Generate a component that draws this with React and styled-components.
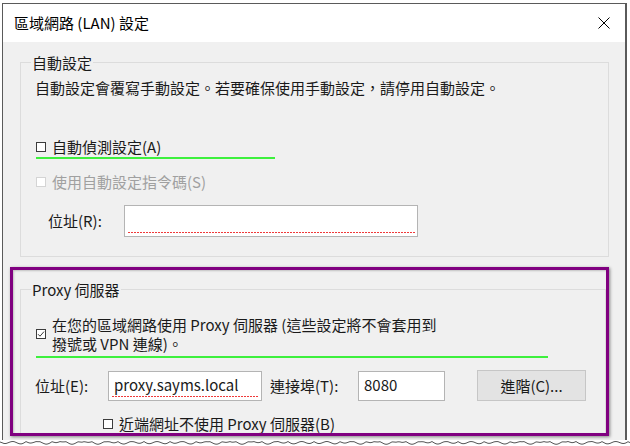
import React from 'react';
import styled, { createGlobalStyle } from 'styled-components';

const GlobalStyle = createGlobalStyle`
  * {
    box-sizing: border-box;
  }

  html, body {
    margin: 0;
    padding: 0;
    background: #fff;
  }

  body {
    font-family: 'Noto Sans CJK TC', 'Noto Sans', sans-serif;
    font-size: 15px;
    color: #1a1a1a;
  }
`;

const Page = styled.div`
  width: 630px;
  height: 446px;
  overflow: hidden;
  padding: 3px 0 0 2px;
  background: #fff;
`;

const Window = styled.div`
  width: 625px;
  height: 437px;
  display: flex;
  flex-direction: column;
  overflow: hidden;
  border-top: 1px solid #5a5a5a;
  border-left: 1px solid #5a5a5a;
  border-right: 2px solid #5a5a5a;
`;

const TitleBar = styled.div`
  height: 38px;
  flex: none;
  background: #fff;
  display: flex;
  align-items: center;
  justify-content: space-between;
  padding: 0 15px 0 11px;
`;

const Title = styled.span`
  font-size: 15px;
  line-height: 20px;
  color: #000;
`;

const CloseIcon = styled.svg`
  width: 12px;
  height: 12px;
  display: block;
`;

const Body = styled.div`
  flex: 1;
  background: #f0f0f0;
  padding: 10px 16px 0 7px;
`;

const Group = styled.fieldset`
  margin: 0 0 0 ${p => p.$inset}px;
  border: 1px solid #dcdcdc;
  border-bottom: ${p => (p.$open ? 'none' : '1px solid #dcdcdc')};
  padding: 0 14px ${p => p.$bottom}px 14px;
  min-width: 0;
`;

const Legend = styled.legend`
  font-size: 15px;
  line-height: 21px;
  height: 21px;
  padding: 0 1px;
  margin-left: -4px;
  color: #1a1a1a;
`;

const Text = styled.div`
  line-height: 20px;
  margin-top: ${p => p.$top}px;
`;

const CheckRow = styled.div`
  display: flex;
  align-items: center;
  gap: 6px;
  width: ${p => p.$width}px;
  margin: ${p => p.$top}px 0 0 ${p => p.$left}px;
  padding-bottom: ${p => p.$pad || 0}px;
  border-bottom: ${p => (p.$underline ? 2 : 1)}px solid ${p => (p.$underline ? '#3df03d' : 'transparent')};
  color: ${p => (p.$disabled ? '#a0a0a0' : '#1a1a1a')};
  line-height: ${p => p.$lh || 20}px;
`;

const Box = styled.span`
  flex: none;
  width: 10px;
  height: 10px;
  border: 1px solid ${p => (p.$disabled ? '#d4d4d4' : '#3c3c3c')};
  background: #fff;
  display: flex;
  align-items: center;
  justify-content: center;
`;

const FieldRow = styled.div`
  display: flex;
  align-items: center;
  margin-top: ${p => p.$top}px;
  padding-left: ${p => p.$left}px;
`;

const Label = styled.span`
  width: ${p => p.$width}px;
  margin-left: ${p => p.$left || 0}px;
  flex: none;
  line-height: 20px;
`;

const Input = styled.div`
  position: relative;
  flex: none;
  width: ${p => p.$width}px;
  height: ${p => p.$height}px;
  background: #fff;
  border: 1px solid #b4b4b4;
  padding: 3px 5px 0;
  line-height: 20px;
  color: #1a1a1a;

  &::after {
    content: '';
    display: ${p => (p.$squiggle ? 'block' : 'none')};
    position: absolute;
    left: 3px;
    right: 2px;
    bottom: 3px;
    height: 1px;
    background: repeating-linear-gradient(to right, #ef3a3a 0 2px, transparent 2px 3px);
  }
`;

const Button = styled.div`
  flex: none;
  width: 109px;
  height: 31px;
  margin-left: ${p => p.$left}px;
  background: #e3e3e3;
  border: 1px solid #c6c6c6;
  display: flex;
  align-items: center;
  justify-content: center;
  line-height: 20px;
  color: #1a1a1a;
`;

const Highlight = styled.div`
  margin-top: 10px;
  height: 169px;
  border: 3px solid #800080;
  padding: 9px 0 0 7px;
  overflow: hidden;
  box-shadow: 1px 1px 3px rgba(0, 0, 0, 0.45), inset 1px 1px 2px rgba(0, 0, 0, 0.2);
`;

const Torn = styled.svg`
  display: block;
  width: 630px;
  height: 6px;
  margin-left: -2px;
`;

const Check = ({ checked, disabled }) => (
  <Box $disabled={disabled}>
    {checked && (
      <svg width="8" height="8" viewBox="0 0 8 8">
        <path d="M1 4.2 L3 6.2 L7 1.6" fill="none" stroke="#3c3c3c" strokeWidth="1" />
      </svg>
    )}
  </Box>
);

const tornPath = () => {
  let d = 'M0 2';
  for (let x = 2; x <= 630; x += 2) {
    const y = 1.5 + Math.abs(Math.sin(x * 0.37) + Math.sin(x * 0.11)) * 1.4;
    d += ` L${x} ${y.toFixed(1)}`;
  }
  return d;
};

const App = () => {
  return (
    <>
      <GlobalStyle />
      <Page lang="zh-Hant-TW">
        <Window>
          <TitleBar>
            <Title>區域網路 (LAN) 設定</Title>
            <CloseIcon viewBox="0 0 12 12">
              <path d="M0.5 0.5 L11.5 11.5 M11.5 0.5 L0.5 11.5" stroke="#000" strokeWidth="1" />
            </CloseIcon>
          </TitleBar>
          <Body>
            <Group $inset={10} $bottom={19}>
              <Legend>自動設定</Legend>
              <Text $top={5}>自動設定會覆寫手動設定。若要確保使用手動設定，請停用自動設定。</Text>
              <CheckRow $top={39} $left={1} $width={239} $underline>
                <Check />
                <span>自動偵測設定(A)</span>
              </CheckRow>
              <CheckRow $top={13} $left={1} $width={260} $disabled>
                <Check disabled />
                <span>使用自動設定指令碼(S)</span>
              </CheckRow>
              <FieldRow $top={12} $left={13}>
                <Label $width={76}>位址(R):</Label>
                <Input $width={294} $height={32} $squiggle />
              </FieldRow>
            </Group>

            <Highlight>
              <Group $inset={0} $bottom={0} $open>
                <Legend>Proxy 伺服器</Legend>
                <CheckRow $top={15} $left={1} $width={512} $lh={19} $pad={3} $underline>
                  <Check checked />
                  <span>
                    在您的區域網路使用 Proxy 伺服器 (這些設定將不會套用到
                    <br />
                    撥號或 VPN 連線)。
                  </span>
                </CheckRow>
                <FieldRow $top={12} $left={0}>
                  <Label $width={73}>位址(E):</Label>
                  <Input $width={154} $height={30} $squiggle>proxy.sayms.local</Input>
                  <Label $width={88} $left={8}>連接埠(T):</Label>
                  <Input $width={87} $height={30}>8080</Input>
                  <Button $left={32}>進階(C)...</Button>
                </FieldRow>
                <CheckRow $top={13} $left={68} $width={300}>
                  <Check />
                  <span>近端網址不使用 Proxy 伺服器(B)</span>
                </CheckRow>
              </Group>
            </Highlight>
          </Body>
        </Window>
        <Torn viewBox="0 0 630 6">
          <path d={tornPath()} fill="none" stroke="#555" strokeWidth="1" />
        </Torn>
      </Page>
    </>
  );
};

export default App;
